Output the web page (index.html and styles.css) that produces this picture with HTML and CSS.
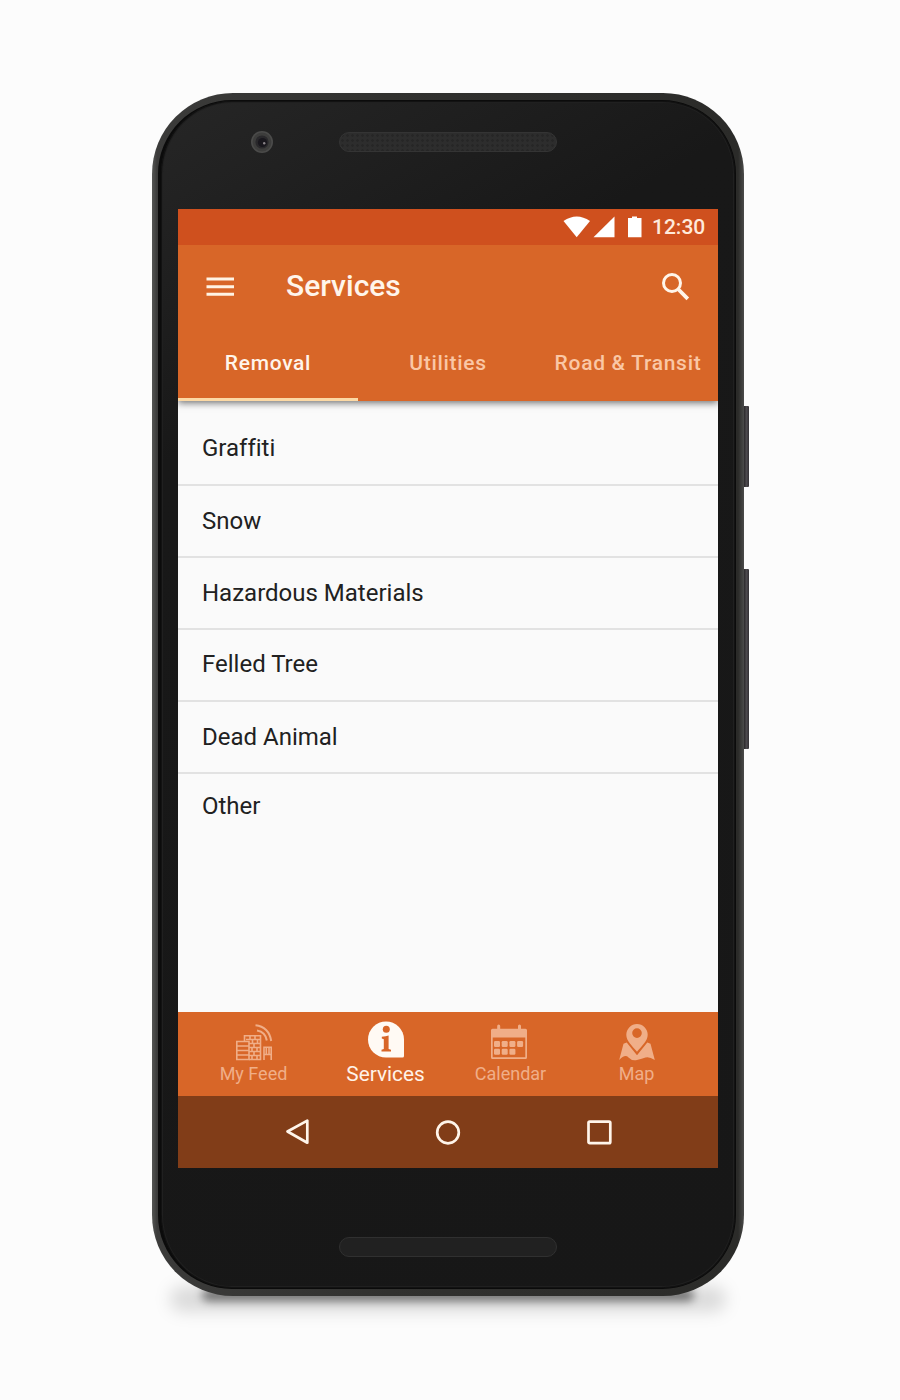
FILE: index.html
```html
<!DOCTYPE html>
<html lang="en">
<head>
<meta charset="utf-8">
<title>Services</title>
<link rel="stylesheet" href="styles.css">
</head>
<body>
<main class="phone">
  <span class="side-button power"></span>
  <span class="side-button volume"></span>
  <div class="face">
    <div class="top-bezel">
      <svg class="camera" width="24" height="24" viewBox="0 0 24 24">
        <circle cx="12" cy="12" r="11" fill="#4b4b4a"/>
        <circle cx="12" cy="12" r="9.4" fill="#3d3d3c"/>
        <circle cx="12" cy="12" r="6.600" fill="#29282b"/>
        <circle cx="12.500" cy="12.500" r="4.600" fill="#19171d"/>
        <circle cx="14.200" cy="13.200" r="1.200" fill="#8a8489"/>
      </svg>
      <div class="speaker earpiece"></div>
    </div>

    <div class="screen">
      <header class="header">
        <div class="status-bar">
          <svg class="status-icons" width="82" height="24" viewBox="0 0 82 24" fill="#fff">
            <path d="M0.500 6.100Q13.700-3.100 27 6.100L13.700 22.300Z"/>
            <path d="M51.500 1.500V22.300H30.500Z"/>
            <path d="M65 2.900H69V1.500H74V2.900H78.500V22.300H65Z"/>
          </svg>
          <span class="time">12:30</span>
        </div>
        <div class="app-bar">
          <svg class="menu-icon" width="28" height="20" viewBox="0 0 28 20" fill="#fff3e4">
            <path d="M.5 .5H28V3.500H.5ZM.5 8.200H28V11.200H.5ZM.5 15.800H28V18.800H.5Z"/>
          </svg>
          <h1 class="title">Services</h1>
          <svg class="search-icon" width="28" height="28" viewBox="0 0 28 28" fill="none" stroke="#fff5ea">
            <circle cx="10" cy="10" r="8.500" stroke-width="3"/>
            <path d="M16 16L25.800 25.800" stroke-width="3.800"/>
          </svg>
        </div>
        <nav class="tabs">
          <a class="tab active">Removal</a>
          <a class="tab">Utilities</a>
          <a class="tab">Road &amp; Transit</a>
        </nav>
      </header>

      <ul class="list">
        <li class="row graffiti">Graffiti</li>
        <li class="row">Snow</li>
        <li class="row">Hazardous Materials</li>
        <li class="row felled">Felled Tree</li>
        <li class="row">Dead Animal</li>
        <li class="row other">Other</li>
      </ul>

      <nav class="bottom-nav">
        <a class="nav-item feed">
          <svg width="38" height="38" viewBox="0 0 38 38" fill="none" stroke="currentColor" stroke-width="1.600">
            <path d="M1.800 18.500H14V36.500H1.800ZM1.800 23H14M1.800 27.500H14M1.800 32H14"/>
            <path d="M9.500 18V12.800H25.500V36.500H14"/>
            <path d="M11 16.500H25M14 20.500H25M14 24.500H25M14 28.500H25M14 32.500H25M15 13V16.500M20 13V16.500M17.500 16.500V20.500M22.500 16.500V20.500M19 20.500V24.500M17 24.500V28.500M22 24.500V28.500M19 28.500V32.500M17 32.500V36.500M22 32.500V36.500"/>
            <path d="M29 37V24.200H36.200V37M31.300 25V31.500M34 25V31.500M29 31.500H36.200"/>
            <path d="M20.500 2.200C29 3 35 9 36.200 18" stroke-width="2"/>
            <path d="M22 7.500C27.500 8.500 31 12 31.800 17.500" stroke-width="2"/>
          </svg>
          <span class="label">My Feed</span>
        </a>
        <a class="nav-item services">
          <svg width="38" height="38" viewBox="0 0 38 38">
            <path fill="#fffaf4" d="M19 .5A18 18 0 0 1 37 18.500V35Q37 36.500 35.500 36.500H19A18 18 0 0 1 19 .5Z"/>
            <g fill="#d86628">
              <circle cx="19.300" cy="8.300" r="3.500"/>
              <path d="M14.800 15.800Q19 15.600 21.600 14.600V28.100L24 28.700V30.500H14.500V28.700L16.800 28.100V18.200L14.800 17.600Z"/>
            </g>
          </svg>
          <span class="label">Services</span>
        </a>
        <a class="nav-item calendar">
          <svg width="38" height="38" viewBox="0 0 38 38" fill="currentColor">
            <path fill-rule="evenodd" d="M2.500 5.800H7.200V3Q7.200 1.500 8.700 1.500T10.200 3V5.800H28V3Q28 1.500 29.500 1.500T31 3V5.800H35.500Q37 5.800 37 7.300V34.500Q37 36 35.500 36H2.500Q1 36 1 34.500V7.300Q1 5.800 2.500 5.800ZM2.700 14.600V34.300H35.300V14.600Z"/>
            <g>
              <rect x="4" y="18" width="6" height="6" rx="1.200"/><rect x="11.700" y="18" width="6" height="6" rx="1.200"/><rect x="19.400" y="18" width="6" height="6" rx="1.200"/><rect x="27.100" y="18" width="6" height="6" rx="1.200"/>
              <rect x="4" y="25.700" width="6" height="6" rx="1.200"/><rect x="11.700" y="25.700" width="6" height="6" rx="1.200"/><rect x="19.400" y="25.700" width="6" height="6" rx="1.200"/>
            </g>
          </svg>
          <span class="label">Calendar</span>
        </a>
        <a class="nav-item map">
          <svg width="38" height="38" viewBox="0 0 38 38" fill="currentColor">
            <path fill-rule="evenodd" d="M19 1A10.700 10.700 0 0 1 29.700 11.700C29.700 18 24 22.500 19 28.800C14 22.500 8.300 18 8.300 11.700A10.700 10.700 0 0 1 19 1ZM19 5.300A4.800 4.800 0 1 0 19 14.900A4.800 4.800 0 1 0 19 5.300Z"/>
            <path d="M5.500 20.800L8.700 19.500L19 32.200L29.300 19.500L32.500 20.800L36.800 37Q31 33.200 27.500 34.500T19 37T10.500 34.500T1.200 37Z"/>
          </svg>
          <span class="label">Map</span>
        </a>
      </nav>

      <div class="system-nav">
        <svg width="28" height="28" viewBox="0 0 28 28"><path d="M4.500 13.500L24.300 2.600V24.700Z"/></svg>
        <svg width="28" height="28" viewBox="0 0 28 28"><circle cx="13" cy="14.500" r="10.800"/></svg>
        <svg width="28" height="28" viewBox="0 0 28 28"><rect x="2.500" y="3.600" width="21.800" height="21.600" rx="1.200"/></svg>
      </div>
    </div>

    <div class="speaker bottom-speaker"></div>
  </div>
</main>
</body>
</html>
```
FILE: styles.css
```css
* { box-sizing: border-box; }

body {
  margin: 0;
  height: 1400px;
  padding: 93px 0 0 152px;
  background: #fcfcfc;
  font-family: Roboto, sans-serif;
}

.phone {
  position: relative;
  width: 591.5px;
  height: 1203px;
  padding: 7px 8px 7px 6px;
  border-radius: 81px;
  background: linear-gradient(to right, #555654 0, #3b3b3a 5px, #31312f 40%, #2b2b29 99%, #4b4b4a 100%);
}

/* soft contact shadow under the handset */
.phone::before,
.phone::after {
  content: "";
  position: absolute;
  z-index: -1;
  border-radius: 50%;
}
.phone::before {
  left: 50px;
  right: 50px;
  bottom: -5px;
  height: 12px;
  border-radius: 6px;
  background: rgba(0, 0, 0, .5);
  filter: blur(5px);
}
.phone::after {
  left: 18px;
  right: 18px;
  bottom: -16px;
  height: 26px;
  border-radius: 13px;
  background: rgba(0, 0, 0, .13);
  filter: blur(8px);
}

.side-button {
  position: absolute;
  left: 591.5px;
  width: 5.500px;
  border-radius: 0 1px 1px 0;
  background: linear-gradient(to right, #2b292b, #4c494d 50%, #343135);
}
.power { top: 313px; height: 81px; }
.volume { top: 476px; height: 180px; }

.face {
  display: flex;
  flex-direction: column;
  height: 1189px;
  padding: 0 18px;
  border: 1px solid #0b0b0b;
  border-left-width: 3px;
  border-radius: 74px;
  background: linear-gradient(150deg, #262626 0, #181818 24%, #171717 100%);
  box-shadow: inset 0 0 0 1px #121212, inset 0 0 0 2px #202020;
}

.top-bezel {
  display: flex;
  gap: 65px;
  height: 108px;
  padding: 29px 0 0 71px;
}

.speaker {
  width: 218px;
  height: 20px;
  border: 1px solid #303030;
  border-radius: 10px;
}
.earpiece {
  border-color: #343434;
  background: radial-gradient(circle, #262626 1px, transparent 1.500px) 0 0 / 5px 5px, #2d2d2d;
  margin-top: 2px;
}
.bottom-speaker { margin: 69px 0 0 160px; background: #212121; }

.screen {
  display: flex;
  flex-direction: column;
  width: 540px;
  height: 959px;
  margin-left: -1px;
  background: #fafafa;
  overflow: hidden;
}

.header {
  height: 192px;
  background: #d86628;
  box-shadow: 0 2px 7px rgba(0, 0, 0, .55);
}

.status-bar {
  display: flex;
  align-items: center;
  height: 36px;
  padding-left: 385px;
  background: #cf501e;
  color: #ffeadb;
}
.time {
  margin-left: 7px;
  font-size: 21px;
  font-weight: 500;
  line-height: 24px;
}

.app-bar {
  display: flex;
  align-items: center;
  height: 83px;
  padding: 0 28px;
}
.title {
  flex: 1;
  margin: -2px 0 0 52px;
  color: #fff5eb;
  font-size: 30px;
  font-weight: 500;
  line-height: 36px;
}

.tabs { display: flex; height: 73px; }
.tab {
  width: 180px;
  padding-top: 22px;
  border-bottom: 3px solid transparent;
  color: #fac7a5;
  font-size: 21px;
  font-weight: 500;
  letter-spacing: .7px;
  line-height: 27px;
  text-align: center;
  white-space: nowrap;
}
.tab.active { border-color: #fcd9a5; color: #fff5eb; }

.list {
  flex: 1;
  margin: 0;
  padding: 11px 0 0;
  list-style: none;
}
.row {
  height: 72px;
  padding-left: 24px;
  border-bottom: 2px solid #e2e2e2;
  color: #212121;
  font-size: 24px;
  font-variant-ligatures: none;
  line-height: 70px;
}
.graffiti { height: 74px; line-height: 72px; }
.felled { line-height: 68px; }
.other { border: 0; line-height: 64px; }

.bottom-nav {
  display: flex;
  height: 84px;
  padding: 8px 0 0 9px;
  background: #d86628;
}
.nav-item {
  display: flex;
  flex-direction: column;
  align-items: center;
  width: 133px;
  padding-top: 3px;
  color: #f0ae88;
}
.services { width: 131px; padding-top: 0; color: #fff3e8; }
.services svg { margin-top: 1px; }
.calendar { width: 119px; }
.calendar svg { margin-left: -3px; }
.map { width: 133px; }
.label {
  margin-top: 2px;
  font-size: 18px;
  line-height: 22px;
  white-space: nowrap;
}
.services .label { margin-top: 4px; font-size: 20.800px; }

.system-nav {
  display: flex;
  gap: 123.500px;
  height: 72px;
  padding: 22px 0 0 105px;
  background: #813d18;
}
.system-nav svg {
  fill: none;
  stroke: #fff5ea;
  stroke-width: 2.700;
  stroke-linejoin: round;
}
```
